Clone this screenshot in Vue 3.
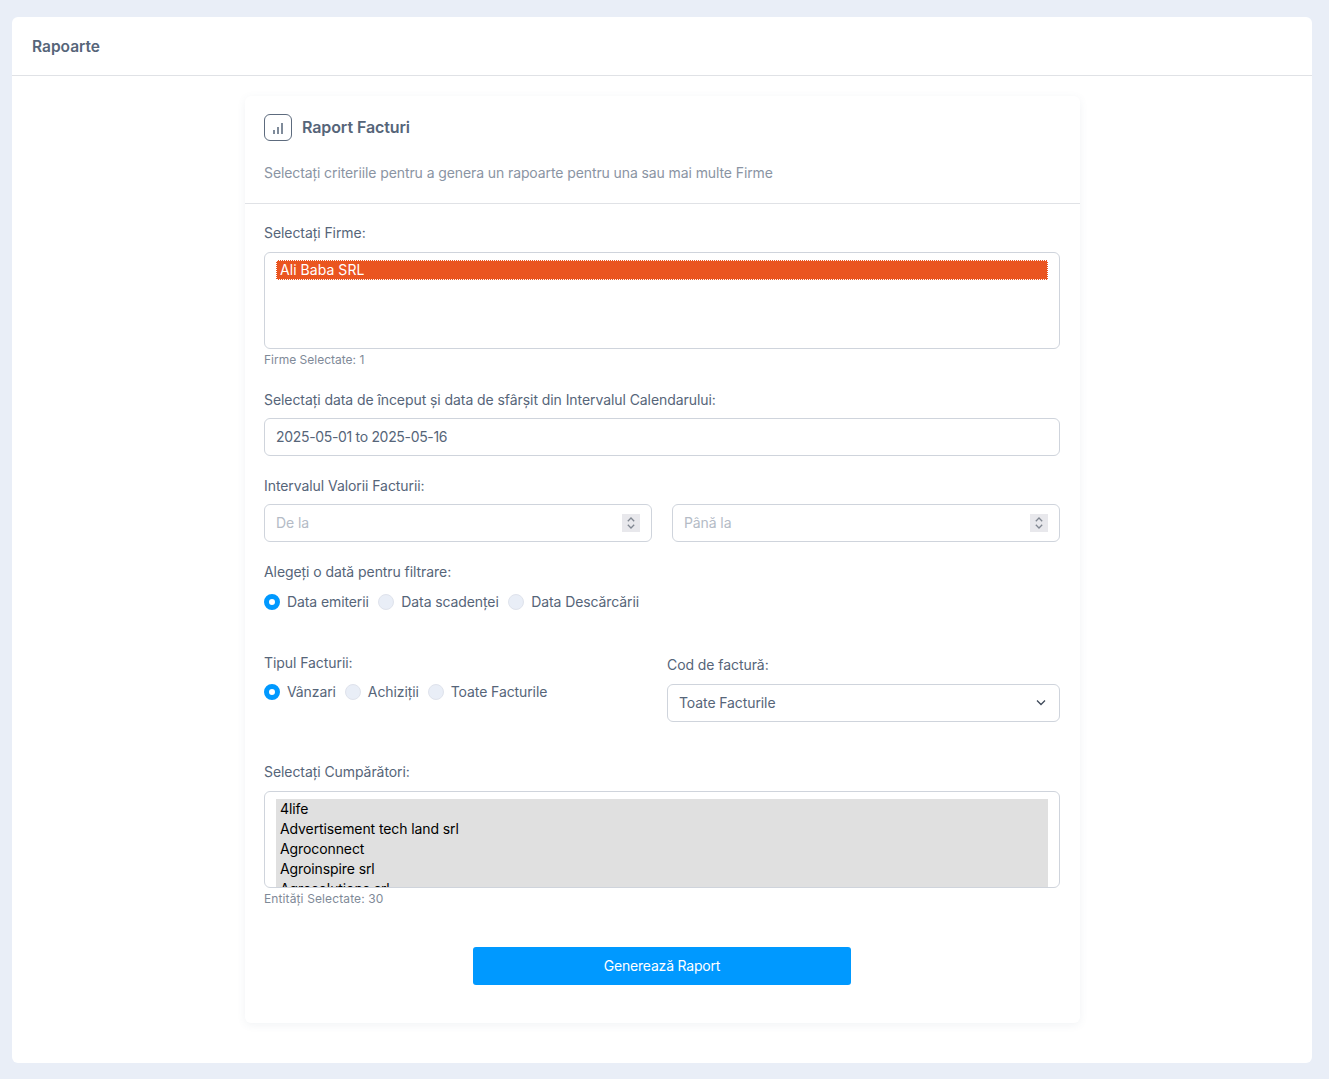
<script setup>
const dateOptions = [
  { label: 'Data emiterii', checked: true },
  { label: 'Data scadenței', checked: false },
  { label: 'Data Descărcării', checked: false }
]
const typeOptions = [
  { label: 'Vânzari', checked: true },
  { label: 'Achiziții', checked: false },
  { label: 'Toate Facturile', checked: false }
]
const buyers = ['4life', 'Advertisement tech land srl', 'Agroconnect', 'Agroinspire srl', 'Agrosolutions srl']
const ranges = ['De la', 'Până la']
</script>

<template>
  <div class="page">
    <section class="shell">
      <header class="shell-head">Rapoarte</header>
      <div class="shell-body">
        <div class="panel">
          <div class="panel-head">
            <div class="title-row">
              <span class="title-icon">
                <svg width="10" height="15" viewBox="0 0 10 15" fill="#7f8b9a">
                  <rect x="0" y="10" width="2" height="4" />
                  <rect x="4" y="7" width="2" height="7" />
                  <rect x="8" y="3" width="2" height="11" />
                </svg>
              </span>
              <h2 class="title">Raport Facturi</h2>
            </div>
            <p class="subtitle">Selectați criteriile pentru a genera un rapoarte pentru una sau mai multe Firme</p>
          </div>
          <form class="panel-body" @submit.prevent>
            <label class="label">Selectați Firme:</label>
            <div class="listbox">
              <div class="option active">Ali Baba SRL</div>
            </div>
            <div class="hint">Firme Selectate: 1</div>

            <label class="label gap-21">Selectați data de început și data de sfârșit din Intervalul Calendarului:</label>
            <div class="field value"><span class="field-text date-text">2025-05-01 to 2025-05-16</span></div>

            <label class="label gap-20">Intervalul Valorii Facturii:</label>
            <div class="range-row">
              <div v-for="r in ranges" :key="r" class="field placeholder">
                <span class="field-text">{{ r }}</span>
                <span class="spinner">
                  <svg width="10" height="14" viewBox="0 0 10 14" fill="none" stroke="#808791" stroke-width="1.3">
                    <path d="M1.8 5.2L5 2l3.2 3.2M1.8 8.8L5 12l3.2-3.2" />
                  </svg>
                </span>
              </div>
            </div>

            <label class="label gap-20">Alegeți o dată pentru filtrare:</label>
            <div class="radios date-radios">
              <span v-for="o in dateOptions" :key="o.label" class="radio-item">
                <span class="radio" :class="{ on: o.checked }"></span><span class="radio-text">{{ o.label }}</span>
              </span>
            </div>

            <div class="type-row">
              <div>
                <label class="label">Tipul Facturii:</label>
                <div class="radios type-radios">
                  <span v-for="o in typeOptions" :key="o.label" class="radio-item">
                    <span class="radio" :class="{ on: o.checked }"></span><span class="radio-text">{{ o.label }}</span>
                  </span>
                </div>
              </div>
              <div class="code-col">
                <label class="label">Cod de factură:</label>
                <div class="field value select">
                  <span class="field-text">Toate Facturile</span>
                  <svg class="chevron" width="12" height="12" viewBox="0 0 12 12" fill="none" stroke="#3f4a5a" stroke-width="1.3">
                    <path d="M2 3.5L6 7.5l4-4" />
                  </svg>
                </div>
              </div>
            </div>

            <label class="label gap-40">Selectați Cumpărători:</label>
            <div class="listbox buyers">
              <div v-for="b in buyers" :key="b" class="option selected">{{ b }}</div>
            </div>
            <div class="hint hint-wide">Entități Selectate: 30</div>

            <div class="actions">
              <button class="submit" type="button"><span class="submit-text">Generează Raport</span></button>
            </div>
          </form>
        </div>
      </div>
    </section>
  </div>
</template>

<style>
html, body { margin: 0; background: #e9eef7; }
</style>

<style scoped>
.page {
  box-sizing: border-box;
  height: 1079px;
  padding: 17px 17px 16px 12px;
  background: #e9eef7;
  font-family: Inter, "Liberation Sans", sans-serif;
  font-size: 14px;
  letter-spacing: -0.1px;
  color: #566579;
}
.shell {
  height: 100%;
  background: #fff;
  border-radius: 6px;
  display: flex;
  flex-direction: column;
}
.shell-head {
  box-sizing: border-box;
  height: 59px;
  padding: 0 20px;
  display: flex;
  align-items: center;
  font-size: 15.5px;
  font-weight: 600;
  letter-spacing: 0;
  border-bottom: 1px solid #e0e2e6;
}
.shell-body { padding: 20px 232px 0 233px; }
.panel {
  height: 927px;
  border-radius: 6px;
  box-shadow: 0 2px 8px rgba(80, 100, 130, 0.08);
  display: flex;
  flex-direction: column;
}
.panel-head {
  box-sizing: border-box;
  height: 108px;
  padding: 17px 19px 0;
  border-bottom: 1px solid #e0e2e6;
}
.title-row { display: flex; align-items: flex-end; gap: 10px; height: 28px; }
.title-icon {
  box-sizing: border-box;
  width: 28px;
  height: 27px;
  padding: 5px 0 0 8px;
  border: 1px solid #5d6b7e;
  border-radius: 6px;
  display: flex;
}
.title { margin: 0; font-size: 16px; font-weight: 600; line-height: 28px; letter-spacing: -0.1px; }
.subtitle { margin: 22px 0 0; color: #8a94a3; line-height: 20px; }
.panel-body { padding: 19px 20px 0 19px; }
.label { display: block; line-height: 20px; margin-bottom: 9px; letter-spacing: -0.07px; }
.gap-21 { margin-top: 21px; margin-bottom: 8px; }
.gap-20 { margin-top: 20px; margin-bottom: 8px; }
.gap-40 { margin-top: 40px; }
.listbox {
  box-sizing: border-box;
  height: 97px;
  padding: 7px 11px 0;
  border: 1px solid #cfd4dc;
  border-radius: 6px;
  overflow: hidden;
  color: #000;
  line-height: 20px;
}
.option { height: 20px; padding: 0 4px; }
.option.active {
  background: #ea5520;
  color: #fff;
  letter-spacing: 0.05px;
  outline: 1px dotted #fff;
  outline-offset: -1px;
}
.option.selected { background: #e0e0e0; }
.hint { font-size: 12px; line-height: 18px; margin-top: 2px; color: #7f8a98; letter-spacing: 0; }
.hint-wide { letter-spacing: 0.12px; }
.field {
  box-sizing: border-box;
  height: 38px;
  padding: 0 11px;
  border: 1px solid #cfd4dc;
  border-radius: 6px;
  display: flex;
  align-items: center;
  justify-content: space-between;
}
.field-text { position: relative; top: -1px; }
.date-text { letter-spacing: -0.32px; }
.value { color: #566579; }
.placeholder { color: #b4bbc6; }
.chevron { margin-right: 1px; }
.range-row { display: grid; grid-template-columns: 1fr 1fr; gap: 20px; }
.spinner {
  width: 18px;
  height: 18px;
  background: #e8e8ec;
  display: flex;
  align-items: center;
  justify-content: center;
}
.radios { display: flex; align-items: center; height: 20px; }
.date-radios { margin-top: 10px; gap: 9.5px; }
.type-radios { gap: 9px; }
.radio-item { display: inline-flex; align-items: center; gap: 7px; }
.radio-text { position: relative; top: -1px; }
.radio {
  box-sizing: border-box;
  width: 16px;
  height: 16px;
  border-radius: 50%;
  background: #e9eef7;
  border: 1px solid #dfe3ec;
}
.radio.on { background: #fff; border: 5px solid #0099ff; }
.type-row {
  display: grid;
  grid-template-columns: 1fr 393px;
  gap: 10px;
  margin-top: 41px;
}
.code-col { padding-top: 2px; }
.actions { display: flex; justify-content: center; margin-top: 39px; }
.submit {
  width: 378px;
  height: 38px;
  border: 0;
  border-radius: 3px;
  background: #0099ff;
  color: #fff;
  font: inherit;
  letter-spacing: -0.2px;
}
.submit-text { position: relative; top: -1px; }
</style>
